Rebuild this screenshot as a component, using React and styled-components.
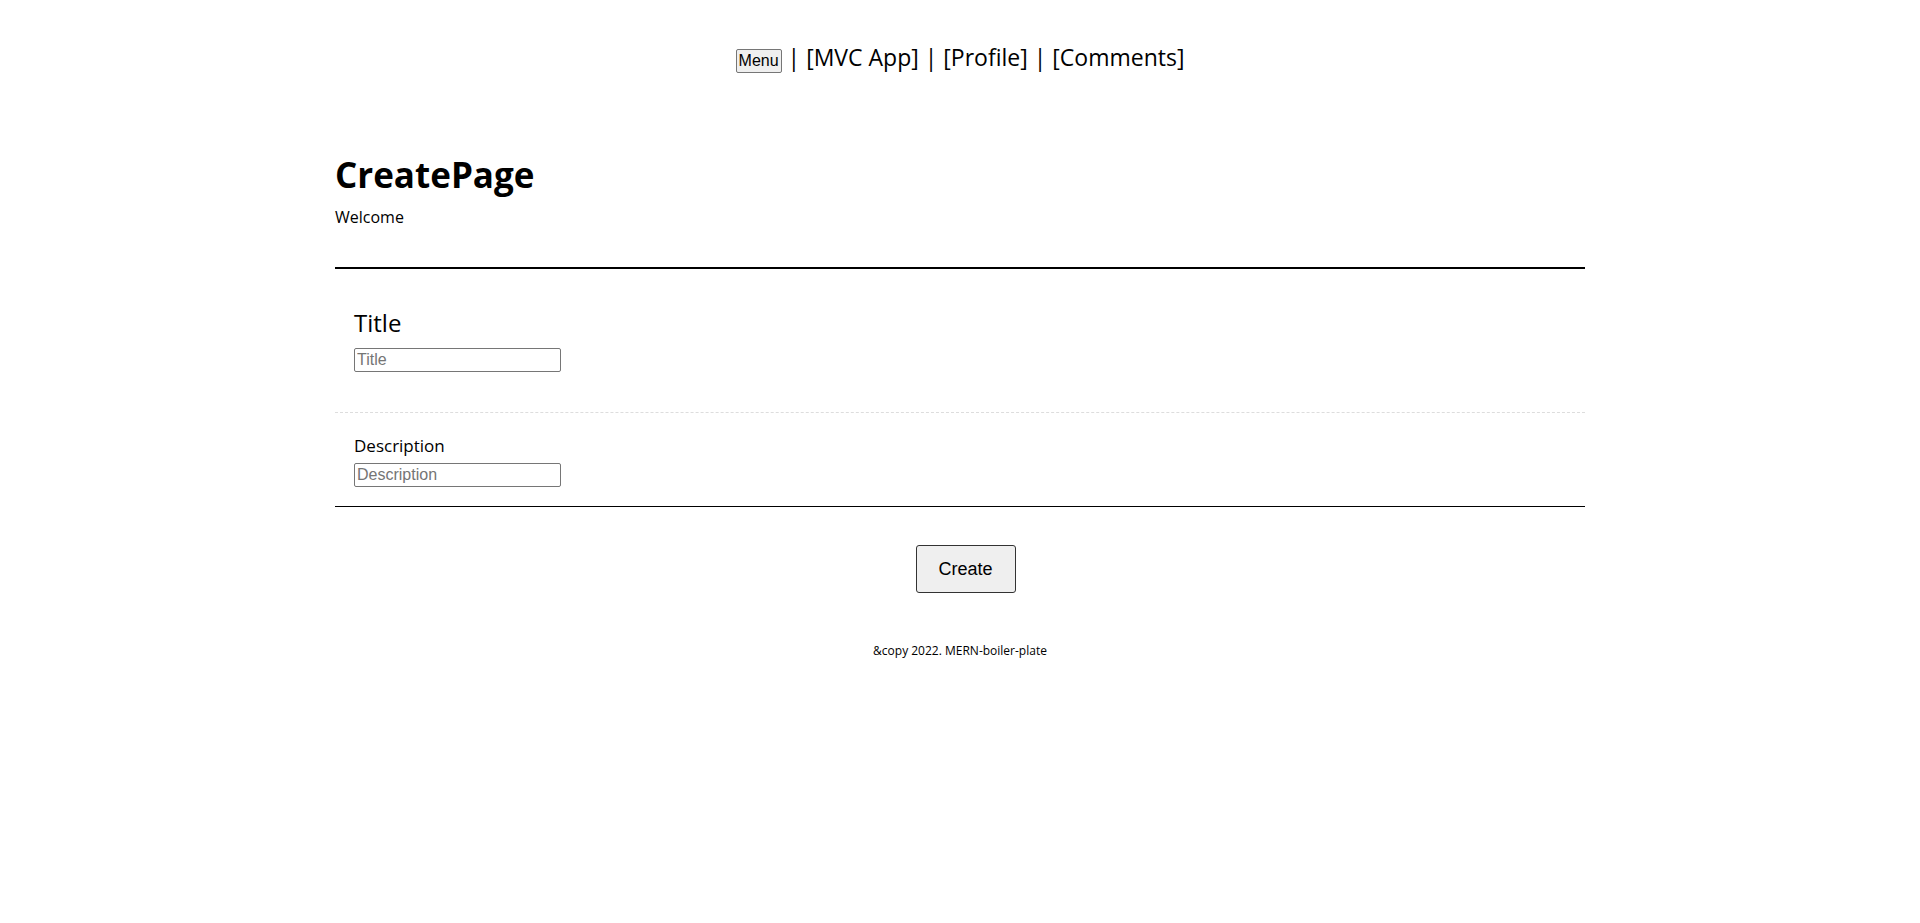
import React from "react";
import styled, { createGlobalStyle } from "styled-components";

const GlobalStyle = createGlobalStyle`
  body {
    margin: 0;
    background: #fff;
    color: #000;
    font-family: "Open Sans", "Noto Sans", sans-serif;
  }
`;

const NavBar = styled.nav`
  padding-top: 41px;
  text-align: center;
  font-size: 23px;
  line-height: 32px;
`;

const MenuButton = styled.button`
  font-family: "Liberation Sans", Arial, sans-serif;
  font-size: 16px;
  padding: 1px 2px;
  height: 24px;
  background: #efefef;
  border: 1px solid #767676;
  border-radius: 2px;
  color: #000;
`;

const Page = styled.main`
  width: 1250px;
  margin: 82px auto 0;
`;

const Heading = styled.h1`
  margin: 0;
  font-size: 35px;
  line-height: 40px;
  font-weight: 700;
`;

const Welcome = styled.p`
  margin: 11px 0 0;
  font-size: 16px;
  line-height: 22px;
`;

const Form = styled.form`
  margin-top: 39px;
  border-top: 2px solid #000;
  border-bottom: 1px solid #000;
`;

const Field = styled.div`
  display: flex;
  flex-direction: column;
  align-items: flex-start;
  padding: ${(p) => p.$pad};
  border-bottom: ${(p) => (p.$divider ? "1px dashed #ddd" : "none")};
`;

const Label = styled.label`
  font-size: ${(p) => p.$size}px;
  line-height: ${(p) => p.$lh}px;
  margin-bottom: ${(p) => p.$gap}px;
`;

const Input = styled.input`
  box-sizing: border-box;
  width: 207px;
  height: 24px;
  padding: 1px 2px;
  font-family: "Liberation Sans", Arial, sans-serif;
  font-size: 16px;
  border: 1px solid #767676;
  border-radius: 2px;
  outline: none;
  &::placeholder {
    color: #757575;
  }
`;

const Actions = styled.div`
  display: flex;
  justify-content: center;
  padding: 38px 0 0 11px;
`;

const CreateButton = styled.button`
  width: 100px;
  height: 48px;
  font-family: "Liberation Sans", Arial, sans-serif;
  font-size: 18px;
  color: #000;
  background: #efefef;
  border: 1px solid #333;
  border-radius: 3px;
`;

const Footer = styled.footer`
  margin-top: 50px;
  text-align: center;
  font-size: 12px;
  line-height: 16px;
`;

export default function App() {
  return (
    <>
      <GlobalStyle />
      <NavBar>
        <MenuButton>Menu</MenuButton> | [MVC App] | [Profile] | [Comments]
      </NavBar>
      <Page>
        <Heading>CreatePage</Heading>
        <Welcome>Welcome</Welcome>
        <Form onSubmit={(e) => e.preventDefault()}>
          <Field $pad="38px 19px 40px" $divider>
            <Label $size={24} $lh={32} $gap={9} htmlFor="title">
              Title
            </Label>
            <Input id="title" placeholder="Title" />
          </Field>
          <Field $pad="21px 19px 19px">
            <Label $size={17} $lh={24} $gap={5} htmlFor="description">
              Description
            </Label>
            <Input id="description" placeholder="Description" />
          </Field>
        </Form>
        <Actions>
          <CreateButton type="submit">Create</CreateButton>
        </Actions>
        <Footer>&amp;copy 2022. MERN-boiler-plate</Footer>
      </Page>
    </>
  );
}
